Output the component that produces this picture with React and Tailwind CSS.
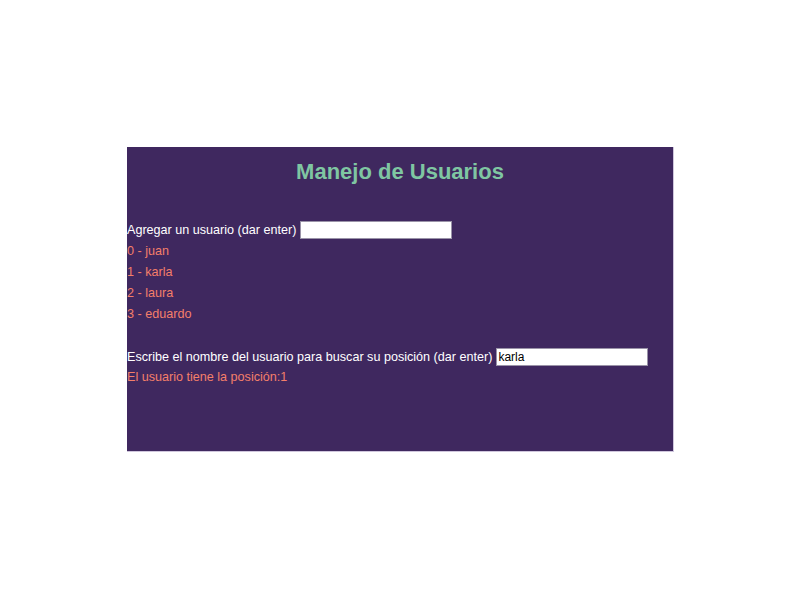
import React, { useState } from 'react';

const App = () => {
  const [users] = useState(['juan', 'karla', 'laura', 'eduardo']);
  const [search, setSearch] = useState('karla');
  const pos = users.indexOf(search);

  return (
    <div className="min-h-screen bg-white pt-[147px]" style={{ fontFamily: '"Liberation Sans", Arial, sans-serif' }}>
      <div className="ml-[127px] w-[547px] h-[305px] bg-[#3f285f] border-r border-b border-[#cfc6dc]">
        {/* Title */}
        <h1 className="pt-[12px] text-center text-[22px] leading-[26px] font-bold text-[#7fc6a2]">
          Manejo de Usuarios
        </h1>

        {/* Add user */}
        <div className="mt-[36px] h-[18px] flex items-center text-[12.6px] text-white">
          <span>Agregar un usuario (dar enter)</span>
          <input
            type="text"
            className="ml-[4px] w-[152px] h-[18px] bg-white border border-[#9a93a8] px-[1px] text-[12px] text-black outline-none"
          />
        </div>
        <div className="mt-[2px]">
          {users.map((u, i) => (
            <div key={i} className="h-[21px] leading-[21px] text-[12.6px] text-[#f47f6a]">
              {i} - {u}
            </div>
          ))}
        </div>

        {/* Search */}
        <div className="mt-[23px] h-[18px] flex items-center text-[12.6px] text-white">
          <span>Escribe el nombre del usuario para buscar su posición (dar enter)</span>
          <input
            type="text"
            value={search}
            onChange={(e) => setSearch(e.target.value)}
            className="ml-[4px] w-[152px] h-[18px] bg-white border border-[#9a93a8] px-[1px] text-[12px] text-black outline-none"
          />
        </div>
        <div className="mt-[1px] h-[21px] leading-[21px] text-[12.6px] text-[#f47f6a]">
          El usuario tiene la posición:{pos}
        </div>
      </div>
    </div>
  );
};

export default App;
